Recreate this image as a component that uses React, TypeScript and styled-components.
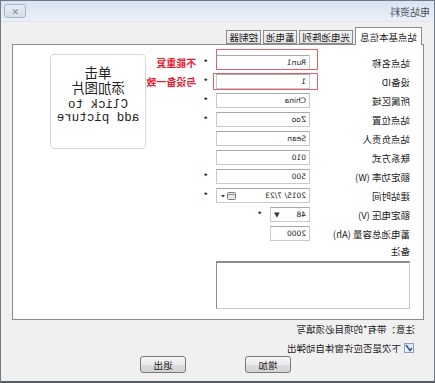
import styled, { createGlobalStyle } from "styled-components"

const Global = createGlobalStyle`
  html, body { margin: 0; padding: 0; background: #ffffff; }
  body { font-family: "Noto Sans CJK SC", "Liberation Sans", sans-serif; }
`

// the reference is a mirrored capture, so the whole dialog is flipped
const Mirror = styled.div`
  width: 435px;
  height: 383px;
  transform: scaleX(-1);
`

const Window = styled.div`
  box-sizing: border-box;
  width: 435px;
  height: 383px;
  display: flex;
  flex-direction: column;
  border: 1px solid #6f7b89;
  border-bottom: 2px solid #555b63;
  background: #f0f0f0;
`

const TitleBar = styled.div`
  height: 20px;
  flex: none;
  display: flex;
  align-items: center;
  justify-content: space-between;
  padding: 0 3px 0 4px;
  background: linear-gradient(#d9e4f1, #eaf0f8);
  border-bottom: 1px solid #dfe5ec;
`

const Title = styled.span`
  font-size: 10px;
  color: #4a4f58;
`

const CloseButton = styled.div`
  width: 20px;
  height: 12px;
  border: 1px solid #a8b4c2;
  border-radius: 3px;
  background: linear-gradient(#e8eef5, #d3dce7);
  display: flex;
  align-items: center;
  justify-content: center;
  font-size: 9px;
  color: #7d8591;
  line-height: 1;
`

const Body = styled.div`
  flex: 1;
  display: flex;
  flex-direction: column;
  padding: 5px 11px 0 10px;
`

const TabStrip = styled.div`
  display: flex;
  align-items: flex-end;
  height: 17px;
  padding-left: 2px;
  gap: 2px;
  position: relative;
  z-index: 1;
`

const Tab = styled.div<{ $active?: boolean }>`
  box-sizing: border-box;
  height: ${(p) => (p.$active ? 18 : 14)}px;
  margin-bottom: ${(p) => (p.$active ? -1 : 0)}px;
  padding: 0 ${(p) => (p.$active ? 4 : 2)}px;
  display: flex;
  align-items: center;
  font-size: 9.5px;
  color: #1a1a1a;
  border: 1px solid #8c8c8c;
  border-bottom: ${(p) => (p.$active ? "none" : "1px solid #8c8c8c")};
  background: ${(p) => (p.$active ? "#ffffff" : "linear-gradient(#f4f4f4, #e2e2e2)")};
  white-space: nowrap;
`

const Panel = styled.div`
  box-sizing: border-box;
  height: 276px;
  background: #ffffff;
  border: 1px solid #8c8c8c;
  display: flex;
  align-items: flex-start;
  padding: 8px 0 0 13px;
`

const Form = styled.div`
  width: 260px;
  display: flex;
  flex-direction: column;
`

const Row = styled.div`
  height: 19px;
  display: grid;
  grid-template-columns: 100px auto;
  align-items: center;
`

const Label = styled.span`
  font-size: 9.5px;
  color: #1a1a1a;
  white-space: nowrap;
`

const Cell = styled.div`
  display: flex;
  align-items: center;
`

const Field = styled.div<{ $w?: number; $flag?: string }>`
  box-sizing: border-box;
  position: relative;
  width: ${(p) => p.$w ?? 94}px;
  height: 15px;
  border: 1px solid #c9c9c9;
  border-top-color: #a9a9a9;
  background: #ffffff;
  display: flex;
  align-items: center;
  padding: 0 3px;
  font-family: "DejaVu Sans", sans-serif;
  font-size: 7.5px;
  color: #222;
  &::after {
    content: "";
    display: ${(p) => (p.$flag ? "block" : "none")};
    position: absolute;
    inset: ${(p) => p.$flag};
    border: 1px solid #e4606b;
  }
`

const Value = styled.span`
  flex: 1;
  white-space: nowrap;
`

const Caret = styled.span`
  font-size: 7px;
  color: #333;
`

const Star = styled.span`
  font-size: 10px;
  color: #111;
  margin-left: 8px;
  line-height: 1;
`

const Warn = styled.span`
  margin-left: 7px;
  font-size: 10px;
  font-weight: bold;
  color: #e8202f;
  white-space: nowrap;
`

const Memo = styled.div`
  margin-top: 1px;
  display: flex;
  flex-direction: column;
  gap: 3px;
`

const MemoBox = styled.div`
  box-sizing: border-box;
  width: 194px;
  height: 48px;
  border: 1px solid #c9c9c9;
  border-top: 2px solid #8d8d8d;
  border-right-color: #8d8d8d;
  background: #ffffff;
`

const Picture = styled.div`
  box-sizing: border-box;
  margin: 1px 0 0 4px;
  width: 96px;
  height: 95px;
  border: 1px solid #d6d9dc;
  border-radius: 4px;
  display: flex;
  flex-direction: column;
  align-items: center;
  padding-top: 10px;
  color: #222;
`

const PicZh = styled.span`
  font-size: 13.5px;
  line-height: 15px;
  white-space: pre-line;
  text-align: center;
`

const PicEn = styled.span`
  margin-top: 4px;
  font-family: "Liberation Mono", monospace;
  font-size: 12.5px;
  line-height: 13px;
  white-space: pre-line;
  text-align: center;
`

const Note = styled.div`
  margin: 2px 0 0 9px;
  font-size: 9.5px;
  color: #1a1a1a;
`

const CheckRow = styled.label`
  margin: 5px 0 0 10px;
  display: flex;
  align-items: center;
  gap: 3px;
  font-size: 9.5px;
  color: #1a1a1a;
`

const CheckBox = styled.span`
  box-sizing: border-box;
  width: 10px;
  height: 10px;
  border: 1px solid #8aa0bd;
  background: linear-gradient(#dfe7f2, #f4f7fb);
  display: flex;
  align-items: center;
  justify-content: center;
`

const Buttons = styled.div`
  margin-top: 1px;
  display: flex;
  gap: 59px;
  padding-left: 133px;
`

const Button = styled.div`
  box-sizing: border-box;
  width: 46px;
  height: 17px;
  border: 1px solid #7a7a7a;
  border-radius: 3px;
  background: linear-gradient(#f5f5f5 0%, #ebebeb 50%, #dcdcdc 51%, #d3d3d3 100%);
  display: flex;
  align-items: center;
  justify-content: center;
  font-size: 9.5px;
  color: #1a1a1a;
`

type Item = {
  label: string
  value?: string
  star?: boolean
  warn?: string
  flag?: string
  kind?: "date" | "select"
  w?: number
}

const items: Item[] = [
  { label: "站点名称", value: "Run1", star: true, warn: "不能重复", flag: "-7px -1px -1px -9px" },
  { label: "设备ID", value: "1", star: true, warn: "与设备一致", flag: "-2px -4px -2px -9px" },
  { label: "所属区域", value: "China", star: true },
  { label: "站点位置", value: "Zoo", star: true },
  { label: "站点负责人", value: "Sean" },
  { label: "联系方式", value: "010" },
  { label: "额定功率 (W)", value: "500", star: true },
  { label: "建站时间", value: "2015/ 7/23", star: true, kind: "date" },
  { label: "额定电压 (V)", value: "48", star: true, kind: "select", w: 40 },
  { label: "蓄电池总容量 (Ah)", value: "2000", w: 40 },
]

function CalendarIcon() {
  return (
    <svg width="16" height="10" viewBox="0 0 16 10">
      <rect x="0.5" y="1.5" width="8" height="7" rx="1" fill="#e6e6e6" stroke="#7d7d7d" />
      <line x1="1" y1="3.5" x2="8" y2="3.5" stroke="#9a9a9a" />
      <path d="M11 4 L15 4 L13 6.5 Z" fill="#333" />
    </svg>
  )
}

export default function App() {
  return (
    <>
      <Global />
      <Mirror>
        <Window>
          <TitleBar>
            <Title>电站资料</Title>
            <CloseButton>✕</CloseButton>
          </TitleBar>
          <Body>
            <TabStrip>
              <Tab $active>站点基本信息</Tab>
              <Tab>光电池阵列</Tab>
              <Tab>蓄电池</Tab>
              <Tab>控制器</Tab>
            </TabStrip>
            <Panel>
              <Form>
                {items.map((it) => (
                  <Row key={it.label}>
                    <Label>{it.label}</Label>
                    <Cell>
                      <Field $w={it.w} $flag={it.flag}>
                        <Value>{it.value}</Value>
                        {it.kind === "date" && <CalendarIcon />}
                        {it.kind === "select" && <Caret>▼</Caret>}
                      </Field>
                      {it.star && <Star>*</Star>}
                      {it.warn && <Warn>{it.warn}</Warn>}
                    </Cell>
                  </Row>
                ))}
                <Memo>
                  <Label>备注</Label>
                  <MemoBox />
                </Memo>
              </Form>
              <Picture>
                <PicZh>{"单击\n添加图片"}</PicZh>
                <PicEn>{"Click to\nadd picture"}</PicEn>
              </Picture>
            </Panel>
            <Note>注意：带有*的项目必须填写</Note>
            <CheckRow>
              <CheckBox>
                <svg width="8" height="8" viewBox="0 0 8 8">
                  <path d="M1 4 L3 6.5 L7 1" fill="none" stroke="#2a4f9a" strokeWidth="1.4" />
                </svg>
              </CheckBox>
              下次是否应许窗体自动弹出
            </CheckRow>
            <Buttons>
              <Button>增加</Button>
              <Button>退出</Button>
            </Buttons>
          </Body>
        </Window>
      </Mirror>
    </>
  )
}
